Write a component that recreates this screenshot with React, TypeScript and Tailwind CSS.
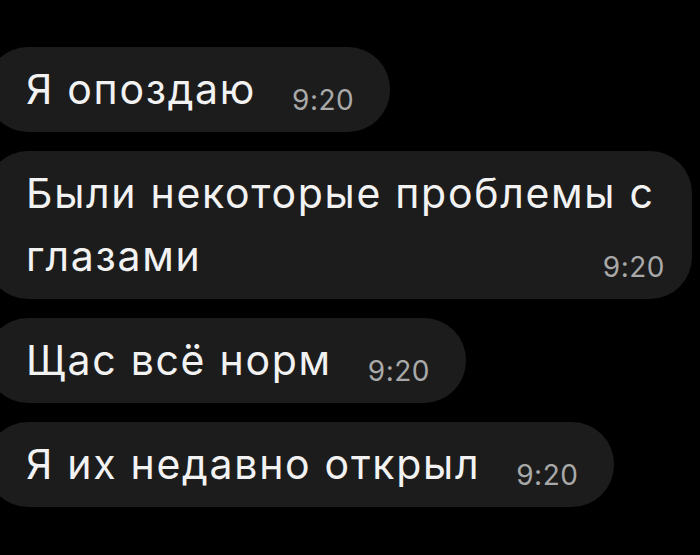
type Message = {
  lines: string[];
  time: string;
  wide?: boolean;
};

const messages: Message[] = [
  { lines: ['Я опоздаю'], time: '9:20' },
  { lines: ['Были некоторые проблемы с', 'глазами'], time: '9:20', wide: true },
  { lines: ['Щас всё норм'], time: '9:20' },
  { lines: ['Я их недавно открыл'], time: '9:20' },
];

const Bubble = ({ lines, time, wide }: Message) => {
  const head = lines.slice(0, -1);
  const last = lines[lines.length - 1];

  return (
    <div
      className={`-ml-[14px] rounded-[42px] bg-[#1c1c1c] pb-[11px] pl-[40px] pt-[11px] ${
        wide ? 'w-[706px] pr-[27px]' : 'w-fit pr-[36px]'
      }`}
    >
      {head.map((line) => (
        <p key={line} className="text-[41px] leading-[63px] tracking-[1.7px] text-[#f2f2f2]">
          {line}
        </p>
      ))}
      <div className={`flex items-end ${wide ? 'justify-between' : ''}`}>
        <p className="whitespace-nowrap text-[41px] leading-[63px] tracking-[1.7px] text-[#f2f2f2]">{last}</p>
        <span className="mb-[6px] ml-[36px] text-[28px] leading-[29px] tracking-[0.5px] text-[#a9a9a9]">
          {time}
        </span>
      </div>
    </div>
  );
};

const App = () => {
  return (
    <div
      className="flex h-[555px] w-[700px] flex-col gap-[19px] overflow-hidden bg-black pt-[47px]"
      style={{ fontFamily: 'Inter, Roboto, "Noto Sans", sans-serif' }}
    >
      {messages.map((m, i) => (
        <Bubble key={i} {...m} />
      ))}
    </div>
  );
};

export default App;
